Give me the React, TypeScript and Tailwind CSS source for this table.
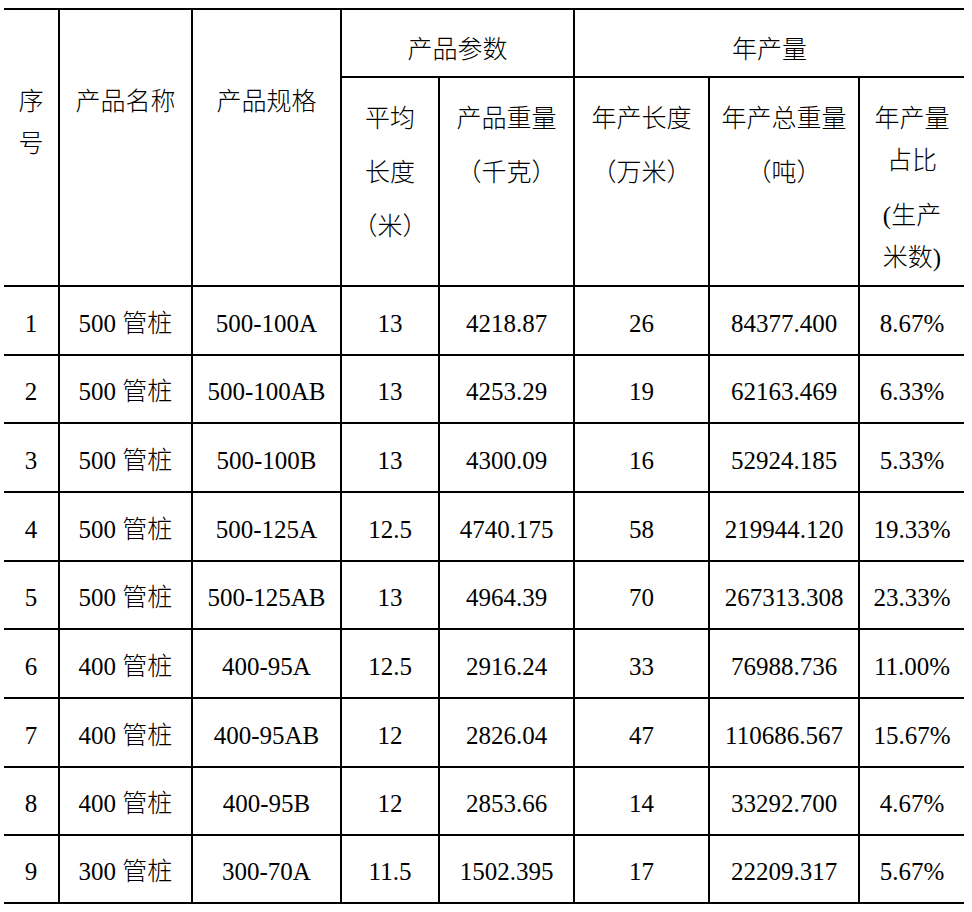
import React from 'react';

type Row = [string, string, string, string, string, string, string, string];

const rows: Row[] = [
  ['1', '500 管桩', '500-100A', '13', '4218.87', '26', '84377.400', '8.67%'],
  ['2', '500 管桩', '500-100AB', '13', '4253.29', '19', '62163.469', '6.33%'],
  ['3', '500 管桩', '500-100B', '13', '4300.09', '16', '52924.185', '5.33%'],
  ['4', '500 管桩', '500-125A', '12.5', '4740.175', '58', '219944.120', '19.33%'],
  ['5', '500 管桩', '500-125AB', '13', '4964.39', '70', '267313.308', '23.33%'],
  ['6', '400 管桩', '400-95A', '12.5', '2916.24', '33', '76988.736', '11.00%'],
  ['7', '400 管桩', '400-95AB', '12', '2826.04', '47', '110686.567', '15.67%'],
  ['8', '400 管桩', '400-95B', '12', '2853.66', '14', '33292.700', '4.67%'],
  ['9', '300 管桩', '300-70A', '11.5', '1502.395', '17', '22209.317', '5.67%'],
];

const cellBase = 'border-b-2 border-black flex flex-col items-center text-center';

const HeadLines = ({ lines, leading }: { lines: string[]; leading: string }) => (
  <>
    {lines.map((l, i) => (
      <div key={i} className={leading}>
        {l}
      </div>
    ))}
  </>
);

export default function App() {
  return (
    <div className="w-[972px] h-[912px] bg-white overflow-hidden">
      <div
        className="mt-[8px] ml-[4px] w-[960px] border-t-2 border-black grid grid-cols-[56px_133px_149px_98px_135px_135px_150px_104px] grid-rows-[68px_209px_69px_68px_69px_69px_68px_69px_69px_68px_68px] text-[25px] text-black font-light"
        style={{ fontFamily: '"Liberation Serif", "Noto Sans CJK SC", serif' }}
      >
        {/* header, first row */}
        <div className={`${cellBase} border-r-2 row-span-2 pt-[71px]`}>
          <HeadLines lines={['序', '号']} leading="leading-[42px]" />
        </div>
        <div className={`${cellBase} border-r-2 row-span-2 pt-[71px]`}>
          <HeadLines lines={['产品名称']} leading="leading-[42px]" />
        </div>
        <div className={`${cellBase} border-r-2 row-span-2 pt-[71px]`}>
          <HeadLines lines={['产品规格']} leading="leading-[42px]" />
        </div>
        <div className={`${cellBase} border-r-2 col-span-2 justify-center pt-[13px]`}>产品参数</div>
        <div className={`${cellBase} col-span-3 justify-center pt-[13px]`}>年产量</div>

        {/* header, second row */}
        <div className={`${cellBase} border-r-2 pt-[14px]`}>
          <HeadLines lines={['平均', '长度', '（米）']} leading="leading-[54px]" />
        </div>
        <div className={`${cellBase} border-r-2 pt-[14px]`}>
          <HeadLines lines={['产品重量', '（千克）']} leading="leading-[54px]" />
        </div>
        <div className={`${cellBase} border-r-2 pt-[14px]`}>
          <HeadLines lines={['年产长度', '（万米）']} leading="leading-[54px]" />
        </div>
        <div className={`${cellBase} border-r-2 pt-[14px]`}>
          <HeadLines lines={['年产总重量', '（吨）']} leading="leading-[54px]" />
        </div>
        <div className={`${cellBase} pt-[20px]`}>
          <HeadLines lines={['年产量', '占比']} leading="leading-[42px]" />
          <div className="mt-[13px]">
            <HeadLines lines={['(生产', '米数)']} leading="leading-[42px]" />
          </div>
        </div>

        {/* body */}
        {rows.map((r) =>
          r.map((v, i) => (
            <div
              key={`${r[0]}-${i}`}
              className={`${cellBase} justify-center pt-[6px] ${i < 7 ? 'border-r-2' : ''}`}
            >
              {v}
            </div>
          ))
        )}
      </div>
    </div>
  );
}
